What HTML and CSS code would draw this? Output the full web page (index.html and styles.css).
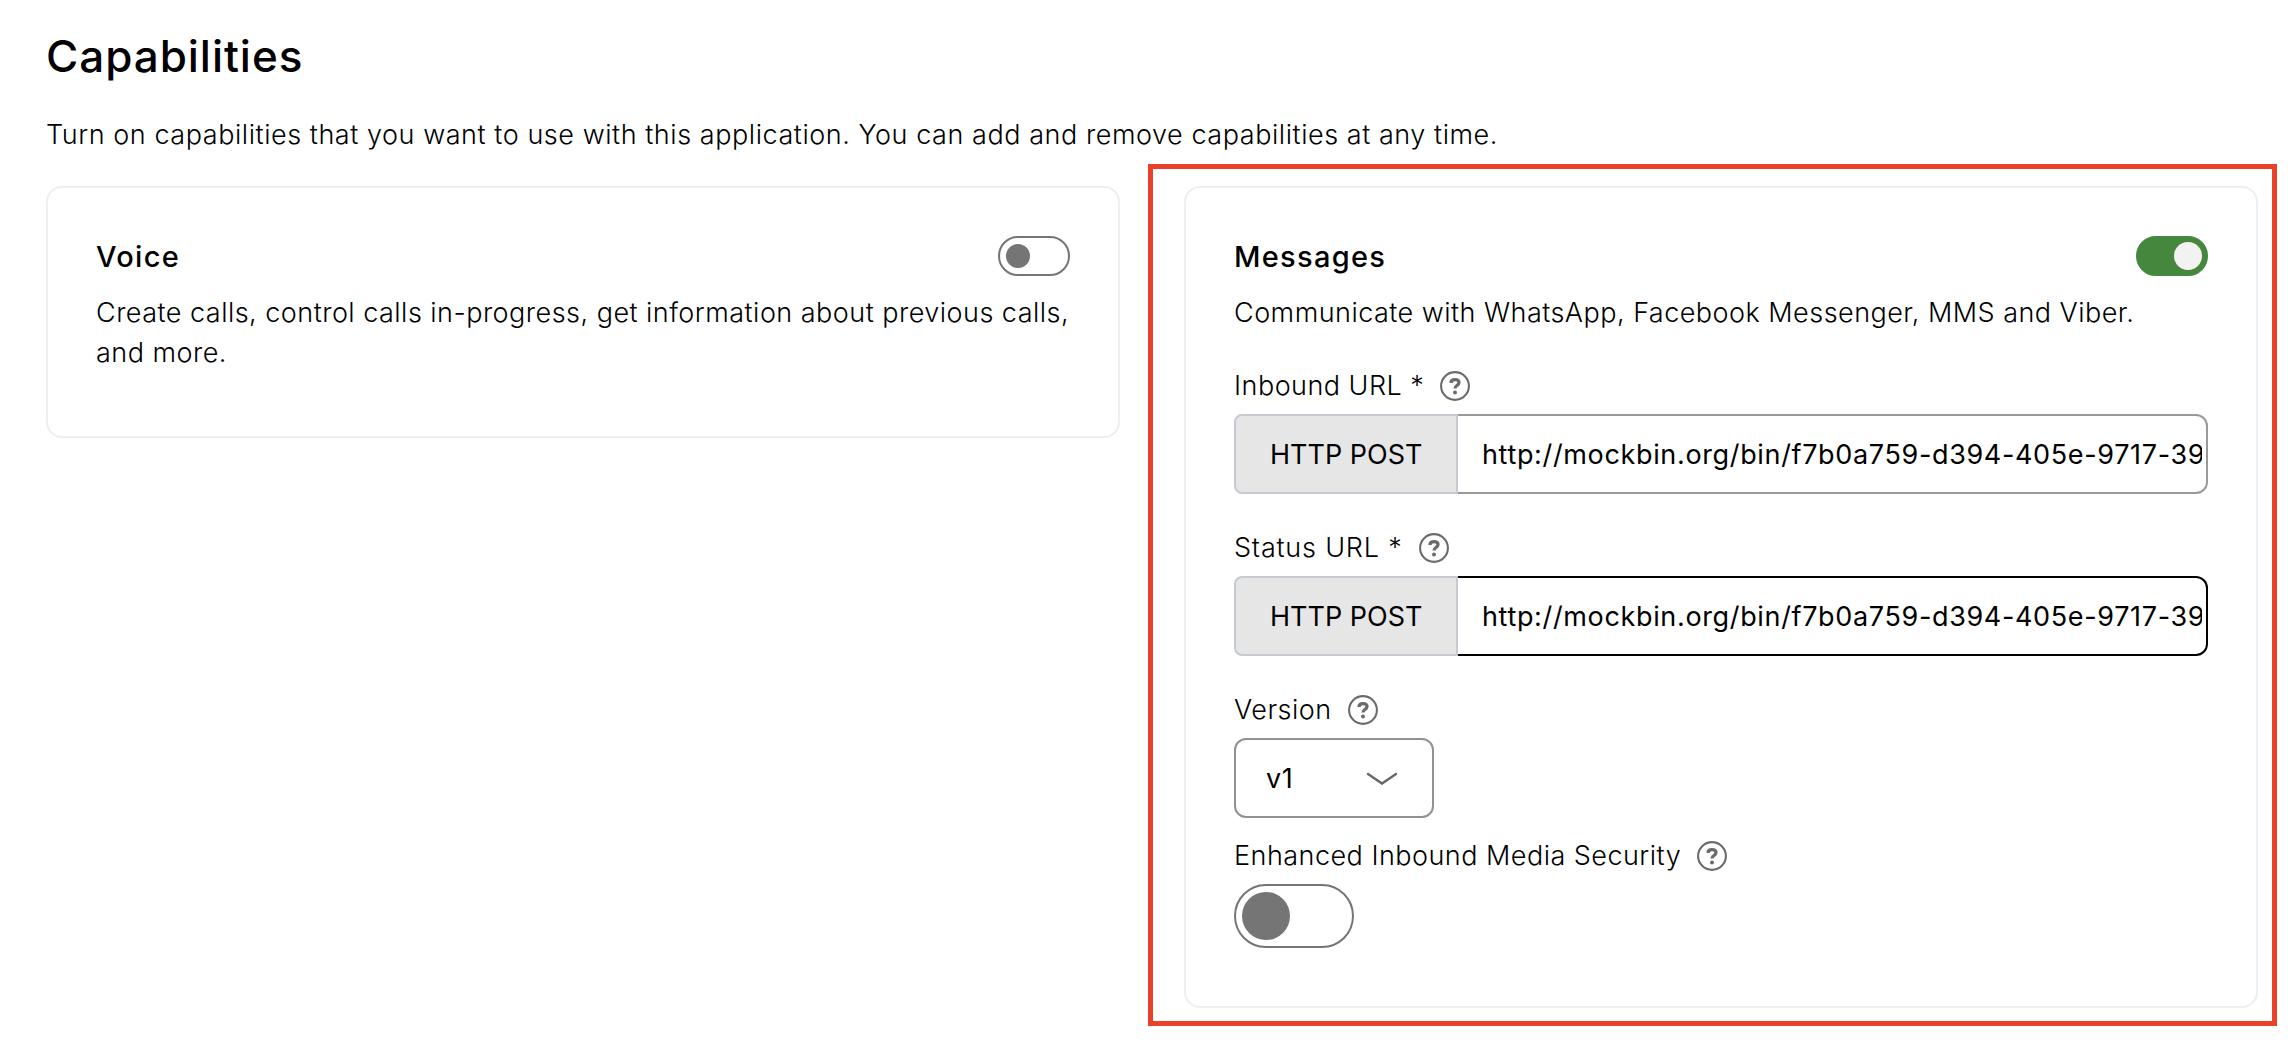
FILE: index.html
```html
<!DOCTYPE html>
<html lang="en">
<head>
<meta charset="utf-8">
<title>Capabilities</title>
<link rel="stylesheet" href="styles.css">
</head>
<body>
<svg class="sprite" aria-hidden="true">
  <symbol id="help" viewBox="0 0 30 30">
    <circle cx="15" cy="15" r="13.9" fill="none" stroke="currentColor" stroke-width="2.1"/>
    <path d="M11 12C11 9.600 12.700 8.600 15 8.600c2.400 0 4 1.200 4 3 0 1.500-.9 2.100-2 2.900-1.200.8-2 1.400-2 3" fill="none" stroke="currentColor" stroke-width="3.300"/>
    <circle cx="15" cy="21.500" r="2" fill="currentColor"/>
  </symbol>
</svg>
<main class="page">
  <h1 class="title">Capabilities</h1>
  <p class="intro">Turn on capabilities that you want to use with this application. You can add and remove capabilities at any time.</p>
  <div class="cards">
    <section class="card">
      <header class="card-head">
        <h2 class="card-title">Voice</h2>
        <span class="switch"><span class="knob"></span></span>
      </header>
      <p class="desc">Create calls, control calls in-progress, get information about previous calls,<br>and more.</p>
    </section>
    <div class="highlight">
      <section class="card card-messages">
        <header class="card-head">
          <h2 class="card-title">Messages</h2>
          <span class="switch switch-on"><span class="knob"></span></span>
        </header>
        <p class="desc">Communicate with WhatsApp, Facebook Messenger, MMS and Viber.</p>
        <div class="label label-first"><span>Inbound URL *</span><svg class="help"><use href="#help"/></svg></div>
        <div class="field"><span class="prefix">HTTP POST</span><span class="value"><span class="clip">http://mockbin.org/bin/f7b0a759-d394-405e-9717-39</span></span></div>
        <div class="label"><span class="label-wide">Status URL *</span><svg class="help"><use href="#help"/></svg></div>
        <div class="field"><span class="prefix">HTTP POST</span><span class="value value-active"><span class="clip">http://mockbin.org/bin/f7b0a759-d394-405e-9717-39</span></span></div>
        <div class="label"><span>Version</span><svg class="help"><use href="#help"/></svg></div>
        <div class="select"><span>v1</span><svg class="chevron" viewBox="0 0 32 14"><path d="M2 2l14 9.500 14-9.500" fill="none" stroke="currentColor" stroke-width="2.400" stroke-linecap="round"/></svg></div>
        <div class="label label-last"><span>Enhanced Inbound Media Security</span><svg class="help"><use href="#help"/></svg></div>
        <span class="switch switch-large"><span class="knob"></span></span>
      </section>
    </div>
  </div>
</main>
</body>
</html>
```
FILE: styles.css
```css
* { box-sizing: border-box; margin: 0; padding: 0; }
body { background: #fff; color: #000; font-family: Inter, "Liberation Sans", sans-serif; font-size: 27px; font-weight: 350; line-height: 40px; letter-spacing: 0.47px; overflow: hidden; }
.sprite { display: block; width: 0; height: 0; }
.page { width: 2288px; height: 1042px; padding: 24px 11px 0 46px; }
.title { font-size: 44px; font-weight: 500; line-height: 64px; letter-spacing: 0.95px; white-space: nowrap; }
.intro { margin-top: 27px; letter-spacing: 0.55px; white-space: nowrap; }
.cards { display: flex; align-items: flex-start; justify-content: space-between; margin-top: 9px; }
.card { width: 1074px; height: 252px; border: 2px solid #eee; border-radius: 16px; padding: 48px; background: #fff; }
.cards > .card { margin-top: 22px; }
.highlight { width: 1129px; height: 862px; border: 5px solid #ea4128; padding: 17px 0 0 31px; }
.card-messages { height: 822px; }
.card-head { display: flex; align-items: center; justify-content: space-between; height: 40px; }
.card-title { padding-top: 1px; font-size: 29px; font-weight: 500; line-height: 40px; letter-spacing: 1.3px; }
.desc { margin-top: 17px; white-space: nowrap; }
.switch { display: flex; align-items: center; width: 72px; height: 40px; border: 2px solid #757575; border-radius: 32px; padding: 0 6px; }
.knob { width: 24px; height: 24px; border-radius: 50%; background: #757575; }
.switch-on { justify-content: flex-end; border-color: #44873d; background: #44873d; padding: 0 4px; }
.switch-on .knob { width: 28px; height: 28px; background: #f2f2f2; }
.switch-large { width: 120px; height: 64px; margin-top: 8px; }
.switch-large .knob { width: 48px; height: 48px; }
.label { display: flex; align-items: center; gap: 16px; height: 40px; margin-top: 34px; white-space: nowrap; }
.label-first { margin-top: 33px; }
.label-last { margin-top: 18px; }
.label-wide { letter-spacing: 0.8px; }
.help { width: 30px; height: 30px; color: #6b6b6b; }
.field { display: flex; height: 80px; margin-top: 8px; font-weight: 400; }
.prefix { display: flex; align-items: center; width: 224px; border: 2px solid #c6cad1; border-radius: 8px 0 0 8px; padding: 2px 0 0 34px; background: #e6e6e6; letter-spacing: 0; white-space: nowrap; }
.value { display: flex; align-items: center; flex: 1; min-width: 0; border: 2px solid #999; border-left: 0; border-radius: 0 12px 12px 0; padding: 2px 4px 0 24px; letter-spacing: 0.65px; }
.value-active { border-color: #000; }
.clip { flex: 1; overflow: hidden; white-space: nowrap; }
.select { display: flex; align-items: center; justify-content: space-between; width: 200px; height: 80px; margin-top: 8px; border: 2px solid #919191; border-radius: 12px; padding: 2px 34px 0 30px; font-weight: 400; }
.chevron { width: 32px; height: 14px; color: #666; }
```
